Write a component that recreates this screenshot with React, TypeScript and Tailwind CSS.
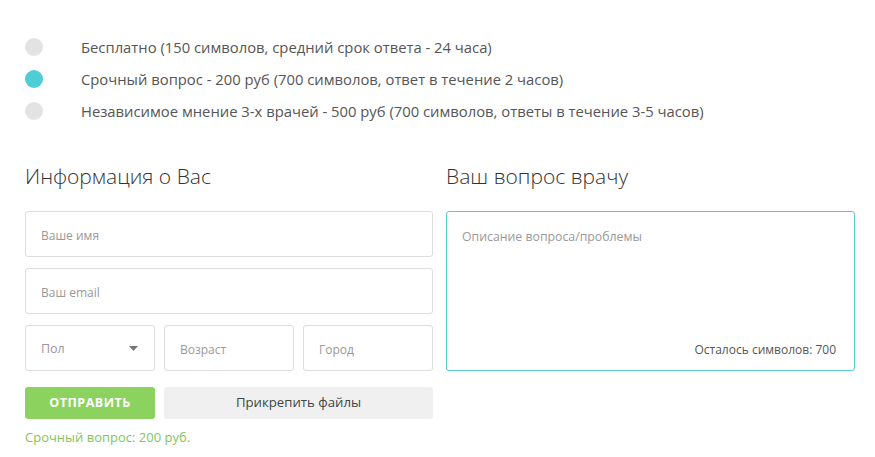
import { useState } from 'react'

const options = [
  'Бесплатно (150 символов, средний срок ответа - 24 часа)',
  'Срочный вопрос - 200 руб (700 символов, ответ в течение 2 часов)',
  'Независимое мнение 3-х врачей - 500 руб (700 символов, ответы в течение 3-5 часов)',
]

export default function App() {
  const [selected, setSelected] = useState(1)

  return (
    <div className="w-[875px] h-[457px] bg-white pl-[25px] pt-[38px] text-[#555] font-['Open_Sans',sans-serif]">
      <div className="flex flex-col gap-[14px]">
        {options.map((opt, i) => (
          <div key={i} className="flex items-center h-[18px] cursor-pointer" onClick={() => setSelected(i)}>
            <div
              className={
                'w-[18px] h-[18px] rounded-full shrink-0 ' +
                (selected === i ? 'bg-[#4fcdd5]' : 'bg-[#e3e3e3]')
              }
            />
            <span className="ml-[38px] text-[14.8px] leading-[18px] whitespace-nowrap">{opt}</span>
          </div>
        ))}
      </div>

      <div className="flex gap-[13px] mt-[41px]">
        <div className="w-[408px]">
          <h2 className="text-[21px] font-light text-[#333] leading-[30px]">Информация о Вас</h2>
          <div className="mt-[20px] flex flex-col gap-[11px]">
            <input
              placeholder="Ваше имя"
              className="h-[46px] border border-[#ddd] rounded-[3px] px-[15px] pt-[3px] text-[12px] placeholder-[#999] outline-none"
            />
            <input
              placeholder="Ваш email"
              className="h-[46px] border border-[#ddd] rounded-[3px] px-[15px] pt-[3px] text-[12px] placeholder-[#999] outline-none"
            />
            <div className="grid grid-cols-3 gap-[9px]">
              <div className="h-[46px] border border-[#ddd] rounded-[3px] px-[15px] pt-[3px] flex items-center justify-between text-[12.5px] text-[#999]">
                <span>Пол</span>
                <svg width="9" height="5" viewBox="0 0 9 5" className="mr-[1px] -mt-[2px]">
                  <path d="M0 0h9L4.5 5z" fill="#777" />
                </svg>
              </div>
              <input
                placeholder="Возраст"
                className="h-[46px] min-w-0 border border-[#ddd] rounded-[3px] px-[15px] pt-[3px] text-[12px] placeholder-[#999] outline-none"
              />
              <input
                placeholder="Город"
                className="h-[46px] min-w-0 border border-[#ddd] rounded-[3px] px-[15px] pt-[3px] text-[12px] placeholder-[#999] outline-none"
              />
            </div>
          </div>
          <div className="mt-[16px] grid grid-cols-3 gap-[9px]">
            <button className="h-[32px] rounded-[3px] bg-[#8bd25f] text-white text-[12.5px] font-bold tracking-[0.5px]">
              ОТПРАВИТЬ
            </button>
            <button className="col-span-2 h-[32px] rounded-[3px] bg-[#f0f0f0] text-[#444] text-[13.2px]">
              Прикрепить файлы
            </button>
          </div>
          <p className="mt-[9px] text-[13px] text-[#86c35b]">Срочный вопрос: 200 руб.</p>
        </div>

        <div className="w-[409px]">
          <h2 className="text-[21px] font-light text-[#333] leading-[30px]">Ваш вопрос врачу</h2>
          <div className="mt-[20px] h-[160px] border border-[#5bc8d2] rounded-[3px] flex flex-col px-[15px] pt-[16px] pb-[11px]">
            <textarea
              placeholder="Описание вопроса/проблемы"
              className="flex-1 resize-none outline-none text-[12.3px] placeholder-[#999]"
            />
            <div className="text-right text-[12px] text-[#555] pr-[3px]">Осталось символов: 700</div>
          </div>
        </div>
      </div>
    </div>
  )
}
